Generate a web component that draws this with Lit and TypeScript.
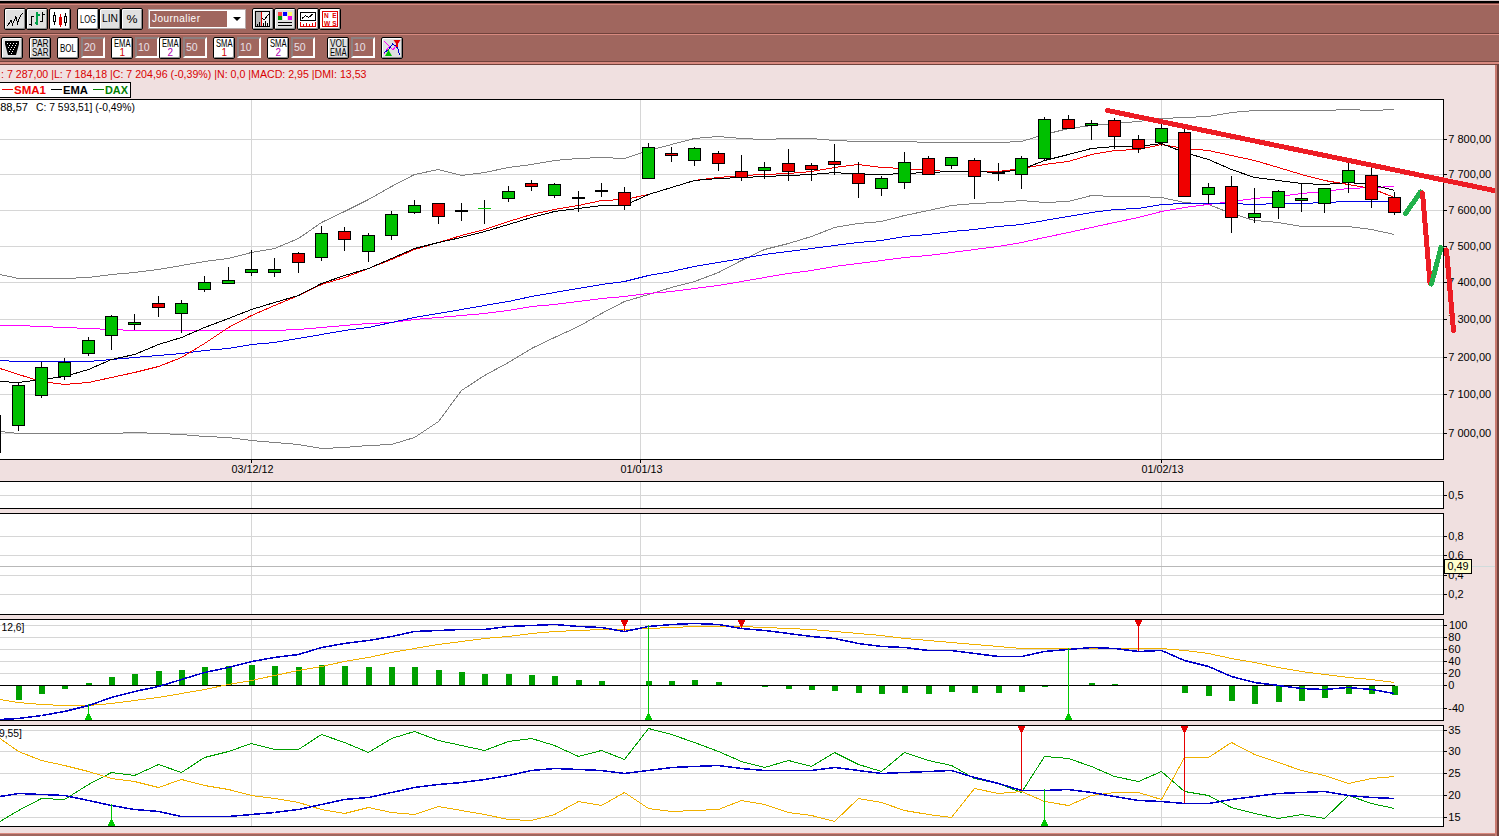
import { LitElement, html, svg, css } from "lit";
import { customElement, property } from "lit/decorators.js";

const RIGHT = 1443;
const DATES: [number, string][] = [[251, "03/12/12"], [640, "01/01/13"], [1161, "01/02/13"]];
const barX = (i: number) => 18 + Math.floor((i * 70) / 3 + 0.001);

// Each series: value at the left edge, then one value per session.
const upper = [274,278,278,278,277,274,272,269,265,261,258,252,248,238,222,211,199,186,174,169,175,172,167,164,160,158,157,158,150,144,138,136,138,139,138,138,140,141,141,141,142,142,142,142,141,134,128,125,123,121,118,117,116,112,110,110,110,110,109,110,109];
const lower = [431,433,433,433,433,433,432,433,434,436,437,440,442,444,448,447,445,444,437,421,390,375,362,348,337,326,313,301,294,287,281,272,260,249,243,236,227,223,221,215,210,205,203,202,200,202,201,195,196,196,197,202,204,213,220,222,226,226,226,229,234];
const ema = [381,382,379,376,369,359,354,344,337,327,318,309,302,295,283,275,268,258,248,242,237,231,224,217,211,208,205,205,194,187,180,178,177,176,175,174,172,174,174,173,172,171,171,172,169,160,154,148,146,146,143,152,159,169,177,180,183,184,182,184,190];
const sma = [368,374,381,384,382,377,372,366,357,343,327,315,305,295,284,277,268,259,249,242,235,229,221,214,209,205,200,199,194,187,180,177,175,174,173,171,167,164,167,168,170,171,171,171,168,164,161,154,150,149,144,148,150,155,160,167,174,180,184,188,197];
const blue = [360,361,361,361,361,359,357,355,353,350,348,344,342,338,334,330,327,322,317,313,309,305,301,296,292,288,284,281,275,271,266,262,258,254,251,248,245,242,240,236,234,231,229,226,224,220,216,212,209,208,204,203,203,203,204,203,203,202,201,201,201];
const magenta = [325,325,326,327,328,329,330,330,330,330,330,330,330,329,327,325,323,322,319,317,315,313,310,306,304,301,298,296,293,291,288,285,281,277,273,270,266,263,260,257,255,252,249,246,242,237,232,227,222,217,211,207,204,201,198,196,193,191,188,187,186];
const macd = [719,718,715,711,705,697,691,686,679,672,667,661,657,654,647,643,640,636,631,630,629,629,626,625,624,626,627,631,626,624,623,624,628,630,633,636,638,643,646,647,650,650,653,656,656,651,649,647,648,651,650,660,666,676,682,685,688,689,687,689,693];
const signal = [699,702,704,705,705,703,700,697,693,689,684,680,675,670,666,661,657,652,648,644,641,638,636,633,631,630,629,629,628,627,626,626,626,627,628,629,631,633,635,638,640,642,644,646,648,648,648,648,648,648,648,650,653,658,662,667,671,674,677,679,682];
const diPlus = [821,810,798,799,784,772,775,764,772,757,751,743,749,749,734,742,752,738,731,740,745,750,741,738,745,756,750,759,728,734,742,751,761,767,760,766,752,764,771,752,760,765,778,783,792,756,758,766,776,781,771,791,795,807,813,818,814,818,795,803,808];
const diMinus = [738,751,760,765,771,778,781,787,779,785,789,795,798,802,809,813,807,812,814,806,810,814,819,820,814,801,805,792,808,811,810,809,800,804,812,815,821,798,802,810,814,817,788,793,791,801,805,795,792,792,799,757,757,742,754,762,770,775,783,778,776];
const adx = [796,793,794,795,800,805,809,811,816,816,816,814,812,809,804,799,797,792,787,784,782,779,775,770,768,769,770,773,770,767,766,765,768,770,770,770,767,770,773,772,771,770,777,783,790,790,789,792,796,800,801,803,803,799,796,793,792,791,795,797,798];
const hist = [700,694,689,683,677,674,671,670,667,666,665,666,667,665,666,667,667,667,670,672,674,674,675,676,680,681,0,681,681,680,682,0,687,689,690,691,693,694,693,694,692,693,693,692,687,0,683,684,0,0,693,696,701,704,702,701,698,694,694,695];

// High, body top, body bottom, low, kind (g up, r down, k flat, l flat line).
type Candle = [number, number, number, number, string];
const candles: Candle[] = [
  [382,385,425,430,"g"],[362,367,395,397,"g"],[358,362,376,379,"g"],[337,340,353,355,"g"],[315,316,335,349,"g"],
  [314,322,324,329,"g"],[296,303,307,316,"r"],[300,303,313,332,"g"],[276,282,289,291,"g"],[267,280,283,283,"g"],
  [250,269,272,275,"g"],[258,269,272,276,"g"],[252,253,262,272,"r"],[226,233,257,260,"g"],[227,231,239,250,"r"],
  [233,235,251,261,"g"],[211,214,235,239,"g"],[200,205,212,213,"g"],[203,203,216,223,"r"],[203,210,211,220,"k"],
  [200,208,208,223,"l"],[186,191,198,201,"g"],[180,183,186,190,"r"],[183,184,195,197,"g"],[191,197,198,211,"k"],
  [183,190,191,196,"k"],[187,192,205,209,"r"],[143,147,178,178,"g"],[147,153,155,161,"r"],[147,148,160,165,"g"],
  [151,153,163,170,"r"],[155,171,177,180,"r"],[162,167,170,178,"g"],[149,163,171,180,"r"],[163,165,169,180,"r"],
  [144,161,164,174,"r"],[162,173,183,197,"r"],[176,178,188,195,"g"],[152,162,182,188,"g"],[156,158,174,174,"r"],
  [157,157,165,168,"g"],[158,160,176,198,"r"],[163,172,173,180,"k"],[156,158,174,188,"g"],[117,119,158,159,"g"],
  [115,119,128,128,"r"],[120,123,125,139,"g"],[118,120,136,148,"r"],[135,139,148,152,"r"],[124,128,142,145,"g"],
  [129,132,196,196,"r"],[183,187,194,203,"g"],[176,186,217,232,"r"],[188,213,217,222,"g"],[190,191,207,218,"g"],
  [183,198,200,211,"g"],[188,188,203,212,"g"],[163,170,182,192,"g"],[168,175,199,207,"r"],[192,197,212,214,"r"],
];

const line = (ys: number[], color: string, w = 1) => svg`<polyline
  points=${ys.map((y, i) => `${i ? barX(i - 1) + 0.5 : 0},${y + 0.5}`).join(" ")}
  fill="none" stroke=${color} stroke-width=${w} shape-rendering="crispEdges"></polyline>`;

const rect = (x: number, y: number, w: number, h: number, fill: string) =>
  svg`<rect x=${x} y=${y} width=${w} height=${h} fill=${fill} shape-rendering="crispEdges"></rect>`;

const label = (x: number, y: number, s: string, w: number, color = "#000") =>
  svg`<text x=${x} y=${y} textLength=${w} lengthAdjust="spacingAndGlyphs" fill=${color}>${s}</text>`;

const textWidth = (s: string) =>
  [...s].reduce((n, c) => n + (c === " " || c === "," || c === "/" ? 3.06 : c === "-" ? 3.66 : 6.12), 0);

const candle = ([h, t, b, l, k]: Candle, i: number) => {
  const x = barX(i);
  const wick = rect(x, h, 1, l - h + 1, "#000");
  if (k === "k") return svg`${wick}${rect(x - 6, t, 13, 2, "#000")}`;
  if (k === "l") return svg`${wick}${rect(x - 6, t, 13, 1, "#00c000")}`;
  return svg`${wick}${rect(x - 6, t, 13, b - t + 1, "#000")}
    ${rect(x - 5, t + 1, 11, b - t - 1, k === "g" ? "#00c000" : "#f00000")}`;
};

const buyMark = (x: number, from: number, base: number) => svg`
  ${rect(x, from, 1, base - from, "#00c800")}
  ${rect(x - 1, base - 6, 3, 2, "#00c800")}${rect(x - 2, base - 4, 5, 2, "#00c800")}${rect(x - 3, base - 2, 7, 2, "#00c800")}`;
const sellMark = (x: number, top: number, to: number) => svg`
  ${rect(x, top, 1, to - top, "#e60000")}
  ${rect(x - 3, top, 7, 2, "#e60000")}${rect(x - 2, top + 2, 5, 2, "#e60000")}${rect(x - 1, top + 4, 3, 2, "#e60000")}`;

interface Panel {
  y: number; top: number; bottom: number; end: number;
  ticks: [number, string][]; content: () => unknown;
}

const pen = (d: string, color: string) =>
  svg`<path d=${d} stroke=${color} stroke-width="5" stroke-linecap="round" fill="none" shape-rendering="crispEdges"></path>`;

const panels: Panel[] = [
  {
    y: 99, top: 99, bottom: 459, end: 481,
    ticks: [[139,"7 800,00"],[174,"7 700,00"],[210,"7 600,00"],[246,"7 500,00"],[282,"7 400,00"],[319,"7 300,00"],[357,"7 200,00"],[394,"7 100,00"],[433,"7 000,00"]],
    content: () => svg`
      ${line(upper, "#808080")}${line(lower, "#808080")}
      ${line(magenta, "#ff00ff")}${line(blue, "#0000e6")}
      ${line(sma, "#f00000")}${line(ema, "#000")}
      ${rect(0, 415, 1, 38, "#000")}
      ${candles.map(candle)}
      ${label(-6, 111, "588,57", 34)}${label(36, 111, "C: 7 593,51] (-0,49%)", 99)}
      ${DATES.map(([x, s]) => svg`${rect(x, 460, 1, 3, "#000")}${label(x - 19.5, 473, s, 42)}`)}
      ${pen("M1107.5 110.5L1494 190.5", "#ed1c24")}
      ${pen("M1405.5 213.5L1420.5 192", "#22b14c")}
      ${pen("M1422.5 193L1430 283", "#ed1c24")}
      ${pen("M1431.5 284L1441 247.5", "#22b14c")}
      ${pen("M1446.5 250L1453.5 330.5", "#ed1c24")}`,
  },
  { y: 481, top: 481, bottom: 508, end: 513, ticks: [[495, "0,5"]], content: () => svg`` },
  {
    y: 513, top: 513, bottom: 614, end: 619,
    ticks: [[536,"0,8"],[555,"0,6"],[575,"0,4"],[594,"0,2"]],
    content: () => svg`
      ${rect(0, 566, RIGHT, 1, "#b8b8b8")}${rect(RIGHT + 1, 566, 51, 1, "#d0dcdc")}
      ${rect(1444, 559, 28, 15, "#000")}${rect(1445, 560, 26, 13, "#ffffcc")}
      ${label(1447.5, 570, "0,49", 21)}`,
  },
  {
    y: 619, top: 619, bottom: 720, end: 725,
    ticks: [[625,"100"],[637,"80"],[649,"60"],[661,"40"],[673,"20"],[685,"0"],[708,"-40"]],
    content: () => svg`
      ${hist.map((v, i) => !v ? svg`` : v < 685 ? rect(barX(i) - 2, v, 6, 685 - v, "#00a000") : rect(barX(i) - 2, 686, 6, v - 686, "#00a000"))}
      ${rect(0, 685, 1395, 1, "#000")}
      ${line(signal, "#f0b000")}${line(macd, "#0000c8", 1.5)}
      ${buyMark(88, 704, 720)}${buyMark(648, 625, 720)}${buyMark(1068, 648, 720)}
      ${sellMark(624, 620, 631)}${sellMark(741, 620, 628)}${sellMark(1138, 620, 651)}
      ${label(1.5, 631, "12,6]", 23)}`,
  },
  {
    y: 725, top: 725, bottom: 826, end: 833,
    ticks: [[730,"35"],[751,"30"],[773,"25"],[795,"20"],[817,"15"]],
    content: () => svg`
      ${line(diPlus, "#00a000")}${line(diMinus, "#f0b000")}${line(adx, "#0000c8", 1.5)}
      ${buyMark(111, 804, 826)}${buyMark(1044, 789, 826)}
      ${sellMark(1021, 726, 790)}${sellMark(1184, 726, 803)}
      ${label(-1, 737, "9,55]", 23)}`,
  },
];

@customElement("chart-panel")
class ChartPanel extends LitElement {
  @property({ attribute: false }) panel!: Panel;
  static styles = css`
    :host { display: block; }
    svg { display: block; }
    text { font: 10px "Liberation Sans", sans-serif; }
  `;
  render() {
    const p = this.panel;
    return html`<svg width="1495" height=${p.end - p.y} viewBox="0 ${p.y} 1495 ${p.end - p.y}">
      ${rect(0, p.top, RIGHT + 1, p.bottom - p.top + 1, "#000")}
      ${rect(0, p.top + 1, RIGHT, p.bottom - p.top - 1, "#fff")}
      ${p.ticks.map(([y]) => rect(0, y, RIGHT, 1, "#d6d6d6"))}
      ${DATES.map(([x]) => rect(x, p.top + 1, 1, p.bottom - p.top - 1, "#d6d6d6"))}
      ${p.ticks.map(([y, s]) => svg`${rect(RIGHT, y, 4, 1, "#000")}
        ${label(s === "100" ? 1449 : 1448.3, y + 4, s, textWidth(s))}`)}
      ${p.content()}
    </svg>`;
  }
}

const twoLines = (a: string, b: string, color = "#000") => svg`
  <text x="3" y="10" textLength="16.5" lengthAdjust="spacingAndGlyphs">${a}</text>
  ${b.length > 1
    ? svg`<text x="3" y="19" textLength="16.5" lengthAdjust="spacingAndGlyphs" fill=${color}>${b}</text>`
    : svg`<text x="8.5" y="19" fill=${color}>${b}</text>`}`;
const oneLine = (s: string, x = 3, w = 16) =>
  svg`<text x=${x} y="15" textLength=${w} lengthAdjust="spacingAndGlyphs">${s}</text>`;
const stroke = (d: string, color = "#000", w = 1) =>
  svg`<path d=${d} fill="none" stroke=${color} stroke-width=${w} shape-rendering="crispEdges"></path>`;

const ICONS: Record<string, unknown> = {
  line: stroke("M3.5 18L7 12L8.5 16.5L12 8.5L13.5 15.5L15.5 9.5L18.5 5"),
  ohlc: svg`${stroke("M5.5 8V18M3 16.5H5.5M5.5 8.5H8M16.5 4V14M14 13.5H16.5M16.5 6.5H19")}
    ${stroke("M11 4V17M8.5 14.5H11M11 6.5H13.5", "#00a048", 2)}`,
  candle: svg`${stroke("M5.5 4V7M5.5 14V17M4.5 7.5H6.5V13.5H4.5ZM16.5 5V8M16.5 15V18M15.5 8.5H17.5V14.5H15.5Z")}
    ${rect(11, 6, 1, 13, "#e00000")}${rect(10, 9, 3, 8, "#e00000")}`,
  log: oneLine("LOG"),
  lin: svg`<text x="3" y="14" textLength="16" lengthAdjust="spacingAndGlyphs">LIN</text>`,
  pct: svg`<text x="5.5" y="15" textLength="11" lengthAdjust="spacingAndGlyphs">%</text>`,
  cursor: svg`${rect(4, 4, 14, 14, "#f4f4f4")}${rect(4, 4, 5, 14, "#b8b8b8")}
    ${stroke("M3.5 3.5H17.5V18.5H3.5Z")}${stroke("M10 10L12 12L16.5 6.5M5.5 18V16M7.5 18V14M11.5 18V15M13.5 18V13M15.5 18V15")}
    ${stroke("M9.5 4V18", "#e00000")}`,
  colors: svg`${rect(4, 4, 4, 4, "#f44")}${rect(9, 4, 4, 4, "#00f")}${rect(14, 4, 4, 4, "#ff6")}
    ${rect(4, 8, 4, 4, "#090")}${rect(9, 8, 4, 4, "#fff")}${rect(14, 8, 4, 4, "#e0e")}
    ${rect(4, 14, 14, 1, "#000")}${rect(4, 17, 14, 1, "#000")}`,
  volume: svg`${stroke("M3.5 4.5H18.5V12.5H3.5Z")}${stroke("M5 10.5L8.5 7.5L11.5 9.5L16.5 5.5")}
    ${stroke("M3.5 14V18.5H18.5V14M6.5 18V16M9.5 18V15M12.5 18V16M15.5 18V15", "#e00000")}`,
  news: svg`${stroke("M3.5 3.5H18.5V18.5H3.5Z", "#e00000")}
    <text class="tiny" x="5" y="10" fill="#e00000" textLength="12.5" lengthAdjust="spacing">NE</text>
    <text class="tiny" x="5" y="17.7" fill="#e00000" textLength="12.5" lengthAdjust="spacing">WS</text>`,
  filter: svg`<path d="M4 4H18V7L15 18H7L4 7Z" fill="#000"></path>
    ${[[6,6],[9,6],[12,6],[15,6],[8,8],[11,8],[14,8],[7,10],[10,10],[13,10],[9,12],[12,12],[8,14],[11,14],[10,16]].map(([x, y]) => rect(x, y, 1, 1, "#fff"))}`,
  parsar: twoLines("PAR", "SAR"),
  bol: oneLine("BOL"),
  ema1: twoLines("EMA", "1", "#d00000"),
  ema2: twoLines("EMA", "2", "#b000b0"),
  sma1: twoLines("SMA", "1", "#d00000"),
  sma2: twoLines("SMA", "2", "#b000b0"),
  volema: twoLines("VOL", "EMA"),
  signals: svg`${stroke("M3.5 4.5L8 9L12 13L15 9L18 5M3 16.5L8 10", "#f0f")}
    ${stroke("M3.5 15.5L8 12L11.5 7L15 9L17 12L18.5 18", "#0000c8")}
    ${rect(15, 4, 2, 6, "#e00000")}<path d="M12.5 3H19.5L16 8Z" fill="#e00000"></path>
    ${rect(7, 12, 1, 7, "#00c000")}<path d="M4 19H11L7.5 13Z" fill="#00c000"></path>`,
};

@customElement("tool-button")
class ToolButton extends LitElement {
  @property() icon = "";
  static styles = css`
    :host {
      display: block; box-sizing: border-box; width: 22px; height: 22px; background: #e0e0e0;
      border: 1px solid #000; border-radius: 2px;
      box-shadow: inset 1px 1px #fff, inset -1px -1px #909090;
    }
    :host([active]) { background: #fff; }
    svg { display: block; margin: -1px; overflow: visible; }
    text { font: 10px "Liberation Sans", sans-serif; }
    .tiny { font: bold 6.5px "Liberation Sans", sans-serif; }
  `;
  render() {
    return html`<svg width="22" height="22">${ICONS[this.icon]}</svg>`;
  }
}

@customElement("app-root")
class AppRoot extends LitElement {
  static styles = css`
    :host {
      display: block; box-sizing: border-box; width: 1499px; height: 836px; overflow: hidden;
      background: #a0665e; border-top: 1px solid #d8c8c8;
      font-family: "Liberation Sans", sans-serif;
    }
    .bar { display: flex; align-items: flex-start; box-sizing: border-box; }
    .first { height: 32px; border-top: 2px solid #000; padding: 5px 0 0 4px; box-shadow: inset 0 1px #804a44, inset 0 2px #d88a80; }
    .second { height: 32px; border-top: 1px solid #70423c; padding: 3px 0 0 1px; box-shadow: inset 0 1px #d88a80; }
    .s1 { margin-left: 1px; }
    .s2 { margin-left: 2px; }
    .s6 { margin-left: 6px; }
    .s12 { margin-left: 12px; }
    .select {
      display: flex; align-items: center; box-sizing: border-box; width: 98px; height: 20px; margin: 1px 0 0 5px;
      background: #fff; border: 1px solid #b8aaaa; padding: 1px;
    }
    .value {
      box-sizing: border-box; width: 77px; height: 16px; background: #a0665e; color: #fff;
      font-size: 10px; line-height: 16px; padding-left: 2px; letter-spacing: 0.45px;
    }
    .arrow { margin-left: 6px; border: 4px solid transparent; border-top-color: #000; border-bottom: 0; }
    .field {
      box-sizing: border-box; width: 24px; height: 21px; border: 2px solid; border-color: #8c8080 #fff #fff #8c8080;
      background: #a0665e; color: #e8e0e8; font-size: 10.5px; line-height: 16px; padding-left: 1px;
    }
    .frame {
      box-sizing: border-box; width: 1499px; height: 775px; margin-top: -4px;
      border-top: 1px solid #70423c; padding-top: 3px;
      box-shadow: inset 0 2px #d88a80, inset 0 3px #70423c, inset -2px 0 #70423c, inset -4px 0 #c87a70;
    }
    .workspace { width: 1495px; background: #f0e0e0; border-bottom: 1px solid #d88a80; }
    .head { display: block; }
    .head text { font: 10px "Liberation Sans", sans-serif; }
    .head .bold { font-weight: bold; }
  `;

  private field(v: string) {
    return html`<div class="field s2">${v}</div>`;
  }

  render() {
    return html`
      <div class="bar first">
        <tool-button icon="line"></tool-button>
        <tool-button icon="ohlc"></tool-button>
        <tool-button icon="candle" active class="s1"></tool-button>
        <tool-button icon="log" active class="s6"></tool-button>
        <tool-button icon="lin"></tool-button>
        <tool-button icon="pct"></tool-button>
        <div class="select"><span class="value">Journalier</span><i class="arrow"></i></div>
        <tool-button icon="cursor" class="s6"></tool-button>
        <tool-button icon="colors"></tool-button>
        <tool-button icon="volume" active class="s1"></tool-button>
        <tool-button icon="news" active></tool-button>
      </div>
      <div class="bar second">
        <tool-button icon="filter"></tool-button>
        <tool-button icon="parsar" class="s6"></tool-button>
        <tool-button icon="bol" active class="s6"></tool-button>${this.field("20")}
        <tool-button icon="ema1" active class="s6"></tool-button>${this.field("10")}
        <tool-button icon="ema2" active></tool-button>${this.field("50")}
        <tool-button icon="sma1" active class="s6"></tool-button>${this.field("10")}
        <tool-button icon="sma2" active class="s6"></tool-button>${this.field("50")}
        <tool-button icon="volema" class="s12"></tool-button>${this.field("10")}
        <tool-button icon="signals" class="s6"></tool-button>
      </div>
      <div class="frame">
        <div class="workspace">
          <svg class="head" width="1495" height="34" viewBox="0 65 1495 34">
            ${label(1, 78, ": 7 287,00 |L: 7 184,18 |C: 7 204,96 (-0,39%) |N: 0,0 |MACD: 2,95 |DMI: 13,53", 365.5, "#d80000")}
            ${rect(0, 82, 131, 16, "#000")}${rect(0, 83, 130, 14, "#fff")}
            ${rect(2, 89, 11, 1, "#f00000")}${rect(51, 89, 11, 1, "#000")}${rect(93, 89, 11, 1, "#008000")}
            <text class="bold" x="14" y="94" textLength="32" lengthAdjust="spacingAndGlyphs" fill="#f00000">SMA1</text>
            <text class="bold" x="63" y="94" textLength="25" lengthAdjust="spacingAndGlyphs">EMA</text>
            <text class="bold" x="105" y="94" textLength="23" lengthAdjust="spacingAndGlyphs" fill="#008000">DAX</text>
          </svg>
          ${panels.map((p) => html`<chart-panel .panel=${p}></chart-panel>`)}
        </div>
      </div>
    `;
  }
}
